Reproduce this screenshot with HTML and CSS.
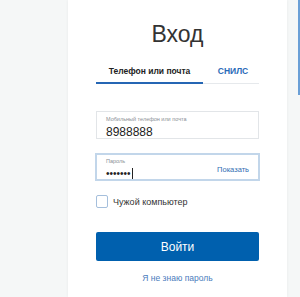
FILE: index.html
```html
<!DOCTYPE html>
<html>
<head>
  <meta charset="utf-8">
  <title>Вход</title>
  <link rel="stylesheet" href="styles.css">
</head>
<body>
  <div class="page">
    <div class="login-card">
      <h1>Вход</h1>

      <div class="tabs">
        <div class="tab active">Телефон или почта</div>
        <div class="tab">СНИЛС</div>
      </div>

      <form class="login-form">
        <div class="field">
          <label>Мобильный телефон или почта</label>
          <div class="value">8988888</div>
        </div>

        <div class="field focused">
          <div class="field-main">
            <label>Пароль</label>
            <div class="value dots">•••••••<span class="caret"></span></div>
          </div>
          <a class="show-link">Показать</a>
        </div>

        <label class="check">
          <span class="box"></span>
          <span>Чужой компьютер</span>
        </label>

        <button type="button">Войти</button>

        <a class="forgot">Я не знаю пароль</a>
      </form>
    </div>
    <div class="side">
      <div class="side-bar"></div>
    </div>
  </div>
</body>
</html>
```

FILE: styles.css
```css
* {
  margin: 0;
  padding: 0;
  box-sizing: border-box;
}

body {
  font-family: 'Liberation Sans', Arial, sans-serif;
  background: #f5f7f7;
  height: 297px;
  overflow: hidden;
}

.page {
  display: flex;
  height: 100%;
  padding-left: 68px;
}

.login-card {
  width: 219px;
  background: #fff;
  box-shadow: 0 0 3px rgba(0,0,0,0.06);
  padding: 0 28px;
}

h1 {
  font-size: 23px;
  font-weight: 400;
  color: #333;
  text-align: center;
  padding-top: 21px;
  height: 58px;
}

.tabs {
  display: flex;
  border-bottom: 1px solid #e6e9ec;
  height: 26px;
}

.tab {
  font-size: 8.5px;
  font-weight: 700;
  color: #2a6ab8;
  padding-top: 8px;
  text-align: center;
}

.tab:first-child {
  width: 107px;
  color: #222;
}

.tab:last-child {
  flex: 1;
  padding-left: 4px;
}

.tab.active {
  border-bottom: 2px solid #2566b4;
  margin-bottom: -1px;
}

.login-form {
  display: flex;
  flex-direction: column;
  padding-top: 27px;
}

.field {
  border: 1px solid #e2e5e8;
  height: 28px;
  padding: 4px 9px 0;
  margin-bottom: 14px;
}

.field.focused {
  border: 2px solid #c2d6ea;
  margin: 0 -1px 14px;
  padding: 3px 9px 0;
  display: flex;
  justify-content: space-between;
  align-items: flex-start;
}

.field label {
  display: block;
  font-size: 5.5px;
  color: #8a8f95;
  height: 7px;
}

.value {
  font-size: 12px;
  color: #222;
  padding-top: 2px;
}

.dots {
  font-size: 10px;
  padding-top: 3px;
  display: flex;
  align-items: center;
}

.caret {
  display: inline-block;
  width: 1px;
  height: 11px;
  background: #222;
  margin-left: 1px;
}

.show-link {
  font-size: 7.5px;
  color: #2f6db3;
  padding-top: 7px;
}

.check {
  display: flex;
  align-items: center;
  gap: 5px;
  font-size: 9px;
  color: #333;
  margin: 0 0 24px;
}

.box {
  width: 12px;
  height: 13px;
  border: 1.5px solid #a5bfdc;
  border-radius: 2px;
}

button {
  height: 29px;
  background: #0060ae;
  color: #fff;
  border: none;
  border-radius: 2px;
  font-family: inherit;
  font-size: 12px;
}

.forgot {
  text-align: center;
  font-size: 8.5px;
  color: #4a7cbc;
  margin-top: 12px;
}

.side {
  flex: 1;
  display: flex;
  justify-content: flex-end;
}

.side-bar {
  width: 2px;
  height: 95px;
  background: #6a9fd6;
}
```
